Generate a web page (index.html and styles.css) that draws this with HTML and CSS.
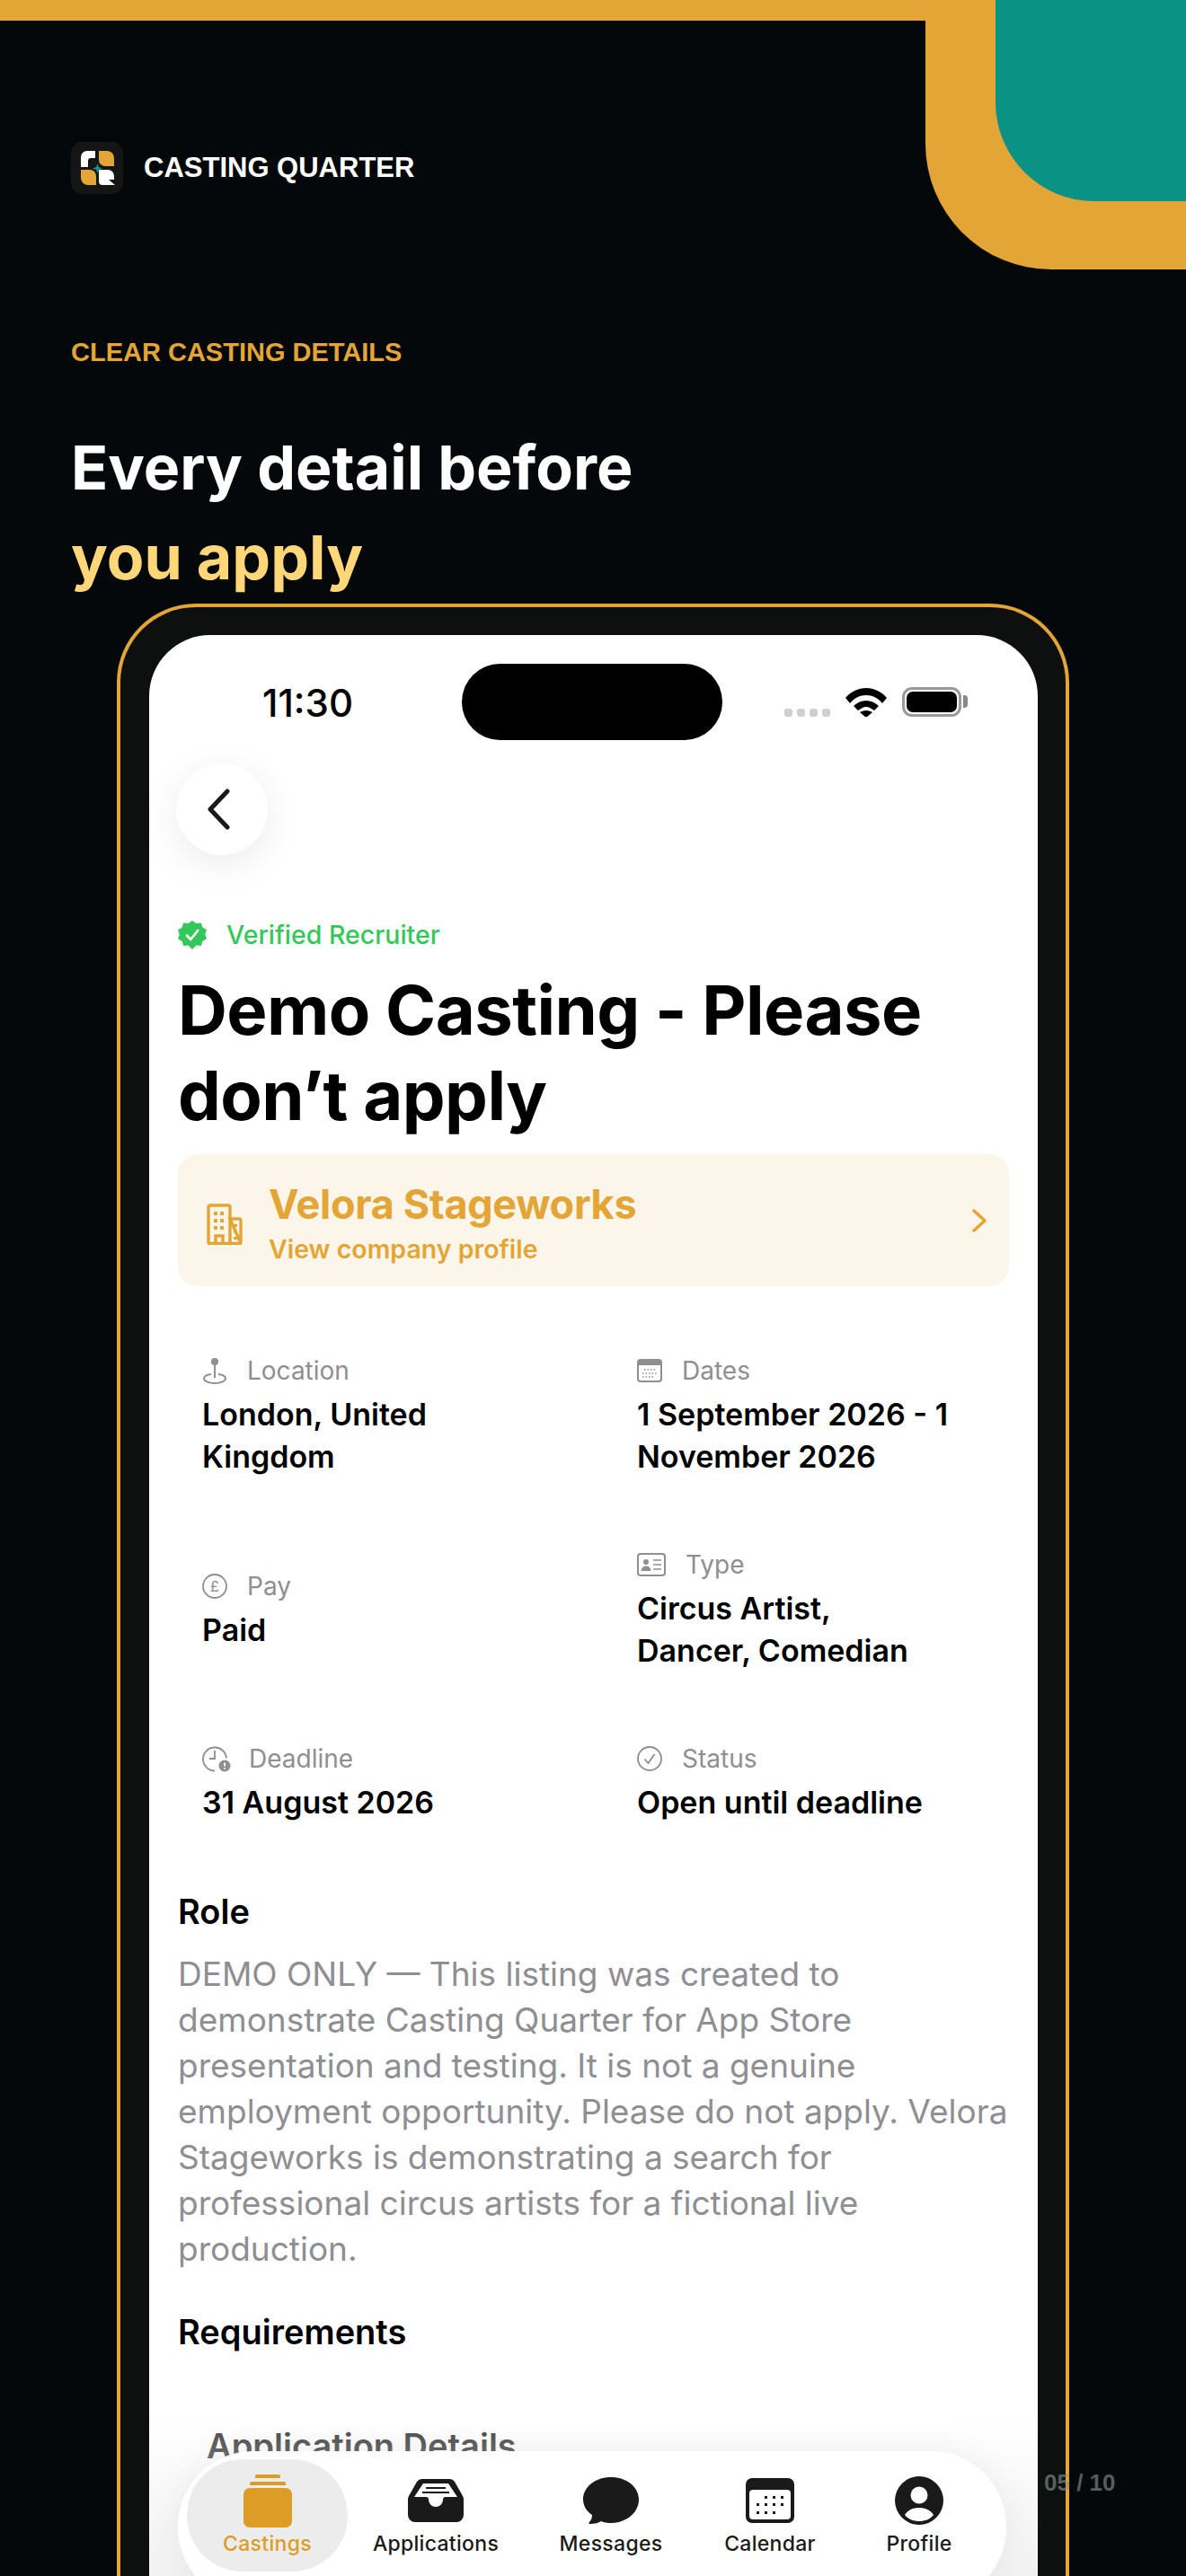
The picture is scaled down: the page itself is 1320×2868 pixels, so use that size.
FILE: index.html
```html
<!DOCTYPE html>
<html lang="en">
    <head>
        <meta charset="UTF-8" />
        <meta name="viewport" content="width=device-width, initial-scale=1.0" />
        <title>Casting Quarter</title>
        <link rel="stylesheet" href="styles.css">
    </head>
    <body>
        <div class="page">
            <div class="cornerAmber"><div class="cornerTeal"></div></div>
            <div class="topBar"></div>
            <header class="intro">
                <div class="brand">
                    <svg class="brandLogo" viewBox="0 0 58 58">
                        <rect width="58" height="58" rx="13" fill="#151515" />
                        <path d="M11 28V17a7 7 0 0 1 7-7h9v8h-5a3 3 0 0 0-3 3v7z" fill="#fff" />
                        <path d="M31 10h9a8 8 0 0 1 8 8v9H38a7 7 0 0 1-7-7z" fill="#e3a535" />
                        <path d="M11 31h10a7 7 0 0 1 7 7v10h-9a8 8 0 0 1-8-8z" fill="#e3a535" />
                        <path d="M31 31h10a7 7 0 0 1 7 7v4h-6l7 6H35a4 4 0 0 1-4-4z" fill="#fff" />
                        <path d="M29.500 24l1.500 4 4 1.500-4 1.500-1.500 4-1.500-4-4-1.500 4-1.500z" fill="#0f9484" />
                    </svg>
                    <span>CASTING QUARTER</span>
                </div>
                <p class="eyebrow">CLEAR CASTING DETAILS</p>
                <h1>Every detail before<br /><em>you apply</em></h1>
            </header>
            <section class="phone">
                <div class="screen">
                    <div class="statusBar">
                        <span class="clock">11:30</span>
                        <div class="island"></div>
                        <div class="statusIcons">
                            <div class="signal"><i></i><i></i><i></i><i></i></div>
                            <svg class="wifi" viewBox="0 0 46 32">
                                <path d="M0 11C6 4 14 0 23 0s17 4 23 11l-5 6C36 11 30 8 23 8S10 11 5 17z" />
                                <path d="M9 20c4-4 9-6 14-6s10 2 14 6l-5 5c-3-2-6-4-9-4s-6 2-9 4z" />
                                <path d="M16 27c2-1 4-2 7-2s5 1 7 2l-7 6z" />
                            </svg>
                            <div class="battery"><div></div></div>
                        </div>
                    </div>
                    <button class="backBtn">
                        <svg viewBox="0 0 26 46" width="26" height="46"><path d="M23 3 4 23l19 20" /></svg>
                    </button>
                    <div class="verified">
                        <svg viewBox="0 0 32 32" width="32" height="32">
                            <path d="M16 0l4.500 3 5.300-.6 1.600 5.100 4.600 2.700-1.700 5 1.700 5-4.600 2.700-1.600 5.100-5.300-.6L16 32l-4.500-4.600-5.300.6-1.600-5.100L0 20.200l1.700-5L0 10.200l4.600-2.700 1.600-5.100 5.300.6z" fill="#34c759" />
                            <path d="M10 16.500l4.200 4.500 8-10" fill="none" stroke="#fff" stroke-width="2.600" stroke-linecap="round" stroke-linejoin="round" />
                        </svg>
                        <span>Verified Recruiter</span>
                    </div>
                    <h2 class="jobTitle">Demo Casting - Please don’t apply</h2>
                    <div class="company">
                        <svg class="companyIcon" viewBox="0 0 40 46">
                            <path d="M2 44V4a2 2 0 0 1 2-2h20a2 2 0 0 1 2 2v40M26 17h10a2 2 0 0 1 2 2v25zM1 44.500h38M10 44v-8h8v8" fill="none" stroke="#e3a535" stroke-width="3.400" />
                            <path d="M8 9h4v4H8zM15 9h4v4h-4zM8 17h4v4H8zM15 17h4v4h-4zM8 25h4v4H8zM15 25h4v4h-4zM30 23h4v3h-4zM30 30h4v3h-4zM30 37h4v3h-4z" fill="#e3a535" />
                        </svg>
                        <div class="companyText">
                            <strong>Velora Stageworks</strong>
                            <span>View company profile</span>
                        </div>
                        <svg class="companyArrow" viewBox="0 0 18 26" width="18" height="26"><path d="M3 2l12 11L3 24" /></svg>
                    </div>
                    <div class="facts">
                        <div class="fact">
                            <div class="factLabel">
                                <svg viewBox="0 0 28 30" width="28" height="30">
                                    <circle cx="14" cy="5" r="4" fill="#8e8e93" />
                                    <path d="M14 9v14" stroke="#8e8e93" stroke-width="2" />
                                    <path d="M10 19c-5 .6-8 2.400-8 4.800C2 26.500 7 29 14 29s12-2.500 12-5.200c0-2.400-3-4.200-8-4.800" fill="none" stroke="#8e8e93" stroke-width="2" />
                                </svg>
                                Location
                            </div>
                            <p>London, United Kingdom</p>
                        </div>
                        <div class="fact">
                            <div class="factLabel">
                                <svg viewBox="0 0 28 26" width="28" height="26">
                                    <rect x="1" y="1" width="26" height="24" rx="3" fill="none" stroke="#8e8e93" stroke-width="2" />
                                    <path d="M1 4a3 3 0 0 1 3-3h20a3 3 0 0 1 3 3v3H1z" fill="#8e8e93" />
                                    <path d="M8 12h12M6 16h16M6 20h12" stroke="#8e8e93" stroke-width="1.500" stroke-dasharray="1.500 2" />
                                </svg>
                                Dates
                            </div>
                            <p>1 September 2026 - 1 November 2026</p>
                        </div>
                        <div class="fact">
                            <div class="factLabel">
                                <svg viewBox="0 0 28 28" width="28" height="28">
                                    <circle cx="14" cy="14" r="13" fill="none" stroke="#8e8e93" stroke-width="1.800" />
                                    <text class="poundGlyph" x="14" y="19.500" text-anchor="middle">£</text>
                                </svg>
                                Pay
                            </div>
                            <p>Paid</p>
                        </div>
                        <div class="fact">
                            <div class="factLabel">
                                <svg viewBox="0 0 32 26" width="32" height="26">
                                    <rect x="1" y="1" width="30" height="24" rx="3" fill="none" stroke="#8e8e93" stroke-width="2" />
                                    <circle cx="10" cy="10" r="3" fill="#8e8e93" />
                                    <path d="M4.500 20c.5-4 3-5.500 5.500-5.500s5 1.500 5.500 5.500z" fill="#8e8e93" />
                                    <path d="M18 8h9M18 13h9M18 18h9" stroke="#8e8e93" stroke-width="1.500" />
                                </svg>
                                Type
                            </div>
                            <p>Circus Artist,<br />Dancer, Comedian</p>
                        </div>
                        <div class="fact">
                            <div class="factLabel tightLabel">
                                <svg viewBox="0 0 32 30" width="32" height="30">
                                    <path d="M27 14a13 13 0 1 0-13 14" fill="none" stroke="#8e8e93" stroke-width="1.800" transform="translate(0 .500)" />
                                    <path d="M14 6v9H8" fill="none" stroke="#8e8e93" stroke-width="1.800" />
                                    <circle cx="25" cy="23" r="6.500" fill="#8e8e93" />
                                    <path d="M25 19.500v4M25 25.300v1.500" stroke="#fff" stroke-width="1.800" />
                                </svg>
                                Deadline
                            </div>
                            <p>31 August 2026</p>
                        </div>
                        <div class="fact">
                            <div class="factLabel">
                                <svg viewBox="0 0 28 28" width="28" height="28">
                                    <circle cx="14" cy="14" r="13" fill="none" stroke="#8e8e93" stroke-width="1.800" />
                                    <path d="M8.500 14.500l4 4.500 7-10" fill="none" stroke="#8e8e93" stroke-width="1.800" />
                                </svg>
                                Status
                            </div>
                            <p>Open until deadline</p>
                        </div>
                    </div>
                    <h3 class="sectionTitle roleTitle">Role</h3>
                    <p class="roleText">DEMO ONLY — This listing was created to demonstrate Casting Quarter for App Store presentation and testing. It is not a genuine employment opportunity. Please do not apply. Velora Stageworks is demonstrating a search for professional circus artists for a fictional live production.</p>
                    <h3 class="sectionTitle reqTitle">Requirements</h3>
                    <h3 class="sectionTitle appTitle">Application Details</h3>
                    <div class="fade"></div>
                    <nav class="tabBar">
                        <a class="tab active">
                            <div class="tabIcon">
                                <svg viewBox="0 0 56 60" width="56" height="60">
                                    <path d="M14 3a2 2 0 0 1 2-2h24a2 2 0 0 1 2 2v2H14zM8 11a2 2 0 0 1 2-2h36a2 2 0 0 1 2 2v2H8z" fill="#dd9c26" />
                                    <rect x="1" y="16" width="54" height="44" rx="7" fill="#dd9c26" />
                                </svg>
                            </div>
                            <span>Castings</span>
                        </a>
                        <a class="tab">
                            <div class="tabIcon">
                                <svg viewBox="0 0 64 48" width="64" height="48">
                                    <path d="M17 0h30a7 7 0 0 1 6 3l9 16a8 8 0 0 1 1 4v17a8 8 0 0 1-8 8H9a8 8 0 0 1-8-8V23a8 8 0 0 1 1-4l9-16a7 7 0 0 1 6-3z" fill="#1a1a1a" />
                                    <path d="M18 5h28l10 15H43a3 3 0 0 0-3 3 8 8 0 0 1-16 0 3 3 0 0 0-3-3H8z" fill="#fff" />
                                    <path d="M21 10h22M17 15h30" stroke="#1a1a1a" stroke-width="2" />
                                </svg>
                            </div>
                            <span>Applications</span>
                        </a>
                        <a class="tab">
                            <div class="tabIcon">
                                <svg viewBox="0 0 62 52" width="62" height="52">
                                    <path d="M31 0c17 0 31 10.500 31 25S48 51 31 51c-4 0-8-.5-11-2-3 2-7 3-12 3-2 0-2-1-1-2 2-2 3-5 3-8C4 38 0 32 0 25 0 10.500 14 0 31 0z" fill="#1a1a1a" />
                                </svg>
                            </div>
                            <span>Messages</span>
                        </a>
                        <a class="tab">
                            <div class="tabIcon">
                                <svg viewBox="0 0 54 50" width="54" height="50">
                                    <rect width="54" height="50" rx="7" fill="#1a1a1a" />
                                    <rect x="4" y="13" width="46" height="33" rx="4" fill="#fff" />
                                    <path d="M21 20h3v3h-3zM30 20h3v3h-3zM39 20h3v3h-3zM12 28h3v3h-3zM21 28h3v3h-3zM30 28h3v3h-3zM39 28h3v3h-3zM12 37h3v3h-3zM21 37h3v3h-3zM30 37h3v3h-3z" fill="#1a1a1a" />
                                </svg>
                            </div>
                            <span>Calendar</span>
                        </a>
                        <a class="tab">
                            <div class="tabIcon">
                                <svg viewBox="0 0 54 54" width="54" height="54">
                                    <circle cx="27" cy="27" r="27" fill="#1a1a1a" />
                                    <circle cx="27" cy="21" r="9.500" fill="#fff" />
                                    <path d="M11 43c3-5 9-8 16-8s13 3 16 8c-4 5-10 7-16 7s-12-2-16-7z" fill="#fff" />
                                </svg>
                            </div>
                            <span>Profile</span>
                        </a>
                    </nav>
                </div>
            </section>
            <span class="pageNum">05 / 10</span>
        </div>
    </body>
</html>
```

FILE: styles.css
```css
* {
    box-sizing: border-box;
}
body {
    margin: 0;
    background-color: #05080a;
    font-family: 'Inter', 'Liberation Sans', sans-serif;
}
.page {
    position: relative;
    height: 2868px;
    overflow: hidden;
    padding-top: 158px;
    background-color: #05080a;
}
.topBar {
    position: absolute;
    top: 0;
    left: 0;
    width: 1040px;
    height: 23px;
    background-color: #e3a535;
}
.cornerAmber {
    position: absolute;
    top: 0;
    left: 1030px;
    width: 290px;
    height: 300px;
    border-radius: 0 0 0 140px;
    background-color: #e3a535;
}
.cornerTeal {
    position: absolute;
    top: 0;
    left: 78px;
    width: 212px;
    height: 224px;
    border-radius: 0 0 0 110px;
    background-color: #0a9384;
}
.intro {
    position: relative;
    padding-left: 79px;
}
.brand {
    display: flex;
    align-items: center;
    gap: 23px;
    height: 58px;
    color: #fff;
    font-family: 'Liberation Sans', sans-serif;
    font-size: 31px;
    font-weight: 700;
}
.brandLogo {
    width: 58px;
    height: 58px;
}
.eyebrow {
    margin: 159px 0 0;
    color: #e3a535;
    font-family: 'Liberation Sans', sans-serif;
    font-size: 29px;
    font-weight: 700;
    line-height: 34px;
}
h1 {
    margin: 61px 0 0;
    color: #fff;
    font-size: 68px;
    font-weight: 700;
    line-height: 100px;
}
h1 em {
    color: #ffd779;
    font-style: normal;
}
.phone {
    position: relative;
    width: 1060px;
    height: 2196px;
    margin: 2px 0 0 130px;
    padding: 31px 31px 0 32px;
    border: 4px solid #e3a535;
    border-bottom: none;
    border-radius: 88px 88px 0 0;
    background-color: #0e0f0f;
}
.screen {
    position: relative;
    height: 100%;
    padding: 0 32px;
    overflow: hidden;
    border-radius: 68px 68px 0 0;
    background-color: #fff;
    color: #000;
}
.statusBar {
    display: grid;
    grid-template-columns: 348px 290px 1fr;
    align-items: center;
    margin: 0 -32px;
    padding-top: 32px;
}
.clock {
    padding: 2px 0 0 126px;
    font-size: 42px;
    font-weight: 500;
}
.island {
    height: 85px;
    border-radius: 43px;
    background-color: #000;
}
.statusIcons {
    display: flex;
    align-items: flex-end;
    gap: 17px;
    padding-left: 69px;
}
.signal {
    display: flex;
    gap: 5px;
}
.signal i {
    width: 9px;
    height: 9px;
    border-radius: 3px;
    background-color: #cfcfcf;
}
.wifi {
    width: 46px;
    height: 32px;
    fill: #000;
}
.battery {
    position: relative;
    width: 66px;
    height: 33px;
    padding: 2px;
    border: 3px solid #999;
    border-radius: 11px;
}
.battery::after {
    content: '';
    position: absolute;
    top: 6px;
    right: -10px;
    width: 5px;
    height: 14px;
    border-radius: 0 4px 4px 0;
    background-color: #888;
}
.battery div {
    height: 100%;
    border-radius: 7px;
    background-color: #000;
}
.backBtn {
    display: flex;
    align-items: center;
    justify-content: center;
    width: 102px;
    height: 102px;
    margin: 26px 0 0 -2px;
    padding: 0 8px 0 0;
    border: none;
    border-radius: 50%;
    background-color: #fff;
    box-shadow: 0 10px 44px rgba(0, 0, 0, 0.08);
}
.backBtn path {
    fill: none;
    stroke: #1a1a1a;
    stroke-width: 5;
    stroke-linecap: round;
    stroke-linejoin: round;
}
.verified {
    display: flex;
    align-items: center;
    gap: 22px;
    margin-top: 71px;
    color: #34c759;
    font-size: 28.500px;
    font-weight: 500;
}
.jobTitle {
    margin: 19px 0 0;
    font-size: 76px;
    font-weight: 700;
    line-height: 95px;
    letter-spacing: -0.600px;
}
.company {
    display: flex;
    align-items: center;
    height: 147px;
    margin-top: 18px;
    padding: 8px 24px 0 32px;
    border-radius: 22px;
    background-color: #fbf5ea;
    color: #e3a535;
}
.companyIcon {
    width: 40px;
    height: 46px;
    margin-right: 29px;
}
.companyText {
    display: flex;
    flex: 1;
    flex-direction: column;
}
.companyText strong {
    font-size: 45px;
    font-weight: 700;
    line-height: 52px;
    letter-spacing: -0.300px;
}
.companyText span {
    margin-top: 4px;
    font-size: 28.500px;
    font-weight: 600;
    line-height: 40px;
}
.companyArrow {
    margin-top: -8px;
}
.companyArrow path {
    fill: none;
    stroke: #e3a535;
    stroke-width: 3.500;
    stroke-linecap: round;
    stroke-linejoin: round;
}
.facts {
    display: grid;
    grid-template-columns: 484px 1fr;
    align-items: center;
    row-gap: 80px;
    margin-top: 77px;
    padding-left: 27px;
}
.factLabel {
    display: flex;
    align-items: center;
    gap: 22px;
    color: #8e8e93;
    font-size: 28px;
    line-height: 34px;
}
.tightLabel {
    gap: 20px;
}
.fact p {
    max-width: 360px;
    margin: 8px 0 0;
    font-size: 34px;
    font-weight: 600;
    line-height: 47px;
}
.poundGlyph {
    fill: #8e8e93;
    font-size: 16px;
}
.sectionTitle {
    margin: 0;
    font-size: 38px;
    font-weight: 600;
    line-height: 44px;
}
.roleTitle {
    margin-top: 76px;
}
.roleText {
    margin: 22px 0 0;
    color: #8e8e93;
    font-size: 37px;
    line-height: 51px;
}
.reqTitle {
    margin-top: 45px;
}
.appTitle {
    margin: 83px 0 0 32px;
    color: #444;
}
.fade {
    position: absolute;
    left: 0;
    right: 0;
    bottom: 0;
    height: 178px;
    background: linear-gradient(to bottom, rgba(240, 240, 240, 0), rgba(240, 240, 240, 0.9));
}
.tabBar {
    position: absolute;
    left: 32px;
    bottom: -30px;
    display: grid;
    grid-template-columns: 179px 196px 194px 160px 172px;
    width: 922px;
    height: 169px;
    padding: 9px 0 0 10px;
    border-radius: 84px;
    background-color: #fff;
    box-shadow: 0 0 40px rgba(0, 0, 0, 0.06);
}
.tab {
    display: flex;
    flex-direction: column;
    align-items: center;
    height: 125px;
    padding-top: 16px;
    border-radius: 62px;
    color: #1a1a1a;
    font-size: 23px;
    font-weight: 500;
    letter-spacing: 0.300px;
}
.tabIcon {
    display: flex;
    align-items: center;
    height: 60px;
}
.tab span {
    margin-top: 4px;
    line-height: 28px;
}
.tab.active {
    background-color: #ececec;
    color: #dd9c26;
}
.pageNum {
    position: absolute;
    top: 2749px;
    left: 1162px;
    color: rgba(130, 145, 140, 0.65);
    font-family: 'Liberation Sans', sans-serif;
    font-size: 26px;
    font-weight: 700;
}
```
